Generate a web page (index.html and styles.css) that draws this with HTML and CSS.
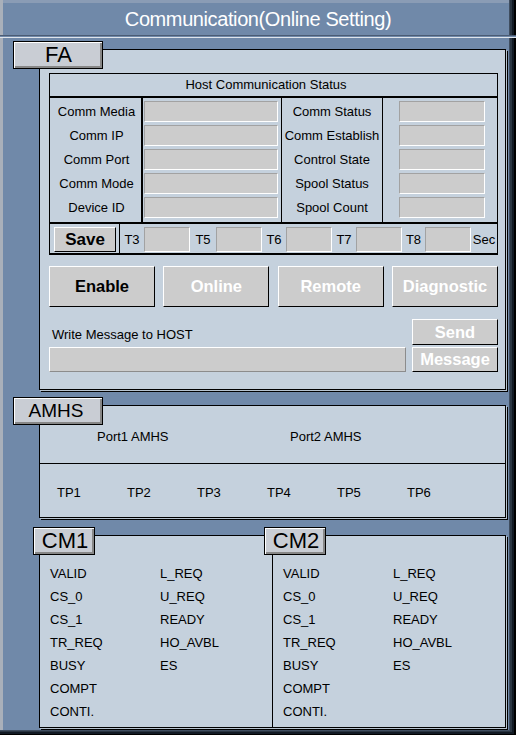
FILE: index.html
```html
<!DOCTYPE html>
<html>
<head>
<meta charset="utf-8">
<title>Communication(Online Setting)</title>
<link rel="stylesheet" href="styles.css">
</head>
<body>
<div class="window">
  <div class="titlebar">Communication(Online Setting)</div>
  <div class="content">

    <section class="group group-fa">
      <div class="tab tab-fa">FA</div>
      <div class="panel panel-fa">
        <div class="status">
          <div class="status-head">Host Communication Status</div>
          <div class="status-body">
            <div class="col col-l1">
              <div class="lbl">Comm Media</div>
              <div class="lbl">Comm IP</div>
              <div class="lbl">Comm Port</div>
              <div class="lbl">Comm Mode</div>
              <div class="lbl">Device ID</div>
            </div>
            <div class="col col-f1">
              <div class="cell"><div class="field f1"></div></div>
              <div class="cell"><div class="field f1"></div></div>
              <div class="cell"><div class="field f1"></div></div>
              <div class="cell"><div class="field f1"></div></div>
              <div class="cell"><div class="field f1"></div></div>
            </div>
            <div class="col col-l2">
              <div class="lbl">Comm Status</div>
              <div class="lbl">Comm Establish</div>
              <div class="lbl">Control State</div>
              <div class="lbl">Spool Status</div>
              <div class="lbl">Spool Count</div>
            </div>
            <div class="col col-f2">
              <div class="cell"><div class="field f2"></div></div>
              <div class="cell"><div class="field f2"></div></div>
              <div class="cell"><div class="field f2"></div></div>
              <div class="cell"><div class="field f2"></div></div>
              <div class="cell"><div class="field f2"></div></div>
            </div>
          </div>
          <div class="status-foot">
            <div class="save-cell"><div class="btn btn-save">Save</div></div>
            <span class="tl tl-3">T3</span><div class="field ft"></div>
            <span class="tl tl-5">T5</span><div class="field ft"></div>
            <span class="tl tl-6">T6</span><div class="field ft"></div>
            <span class="tl tl-7">T7</span><div class="field ft"></div>
            <span class="tl tl-8">T8</span><div class="field ft"></div>
            <span class="tl tl-sec">Sec</span>
          </div>
        </div>

        <div class="actions">
          <div class="btn btn-big btn-active">Enable</div>
          <div class="btn btn-big btn-off">Online</div>
          <div class="btn btn-big btn-off">Remote</div>
          <div class="btn btn-big btn-off">Diagnostic</div>
        </div>

        <div class="msg">
          <div class="msg-left">
            <div class="msg-label">Write Message to HOST</div>
            <div class="msg-input"></div>
          </div>
          <div class="msg-right">
            <div class="btn btn-off btn-send">Send</div>
            <div class="btn btn-off btn-message">Message</div>
          </div>
        </div>
      </div>
    </section>

    <section class="group group-amhs">
      <div class="tab tab-amhs">AMHS</div>
      <div class="panel panel-amhs">
        <div class="amhs-top">
          <span class="port">Port1 AMHS</span>
          <span class="port">Port2 AMHS</span>
        </div>
        <div class="amhs-bottom">
          <span class="tp">TP1</span>
          <span class="tp">TP2</span>
          <span class="tp">TP3</span>
          <span class="tp">TP4</span>
          <span class="tp">TP5</span>
          <span class="tp">TP6</span>
        </div>
      </div>
    </section>

    <section class="group group-cm">
      <div class="tab tab-cm tab-cm1">CM1</div>
      <div class="tab tab-cm tab-cm2">CM2</div>
      <div class="panel panel-cm">
        <div class="cm-half cm-1">
          <div class="sigcol">
            <div class="sig">VALID</div>
            <div class="sig">CS_0</div>
            <div class="sig">CS_1</div>
            <div class="sig">TR_REQ</div>
            <div class="sig">BUSY</div>
            <div class="sig">COMPT</div>
            <div class="sig">CONTI.</div>
          </div>
          <div class="sigcol">
            <div class="sig">L_REQ</div>
            <div class="sig">U_REQ</div>
            <div class="sig">READY</div>
            <div class="sig">HO_AVBL</div>
            <div class="sig">ES</div>
          </div>
        </div>
        <div class="cm-half cm-2">
          <div class="sigcol">
            <div class="sig">VALID</div>
            <div class="sig">CS_0</div>
            <div class="sig">CS_1</div>
            <div class="sig">TR_REQ</div>
            <div class="sig">BUSY</div>
            <div class="sig">COMPT</div>
            <div class="sig">CONTI.</div>
          </div>
          <div class="sigcol">
            <div class="sig">L_REQ</div>
            <div class="sig">U_REQ</div>
            <div class="sig">READY</div>
            <div class="sig">HO_AVBL</div>
            <div class="sig">ES</div>
          </div>
        </div>
      </div>
    </section>

  </div>
</div>
</body>
</html>
```

FILE: styles.css
```css
* {
  box-sizing: border-box;
  margin: 0;
  padding: 0;
}

html, body {
  margin: 0;
  background: #7089a9;
}

body {
  width: 516px;
  height: 735px;
  overflow: hidden;
  font-family: "Liberation Sans", Arial, sans-serif;
  font-size: 13px;
  color: #000;
}

.window {
  position: relative;
  width: 516px;
  height: 735px;
  background: #7089a9;
  box-shadow:
    inset -2px -1px 0 #000,
    inset -4px -3px 0 #121a24,
    inset -6px -4px 0 #2a3542,
    inset -7px -5px 0 #3f4d5f,
    inset 3px 0 0 #a9b0ba,
    inset 0 3px 0 #8a9cb5;
}

.titlebar {
  height: 36px;
  padding-top: 3px;
  line-height: 32px;
  border-bottom: 1px solid #4b5c74;
  box-shadow: 0 1px 0 #7089a9, 0 2px 0 #dfe5ec;
  text-align: center;
  color: #fff;
  font-size: 20px;
  letter-spacing: -0.4px;
}

.content {
  padding-top: 5px;
}

.group {
  position: relative;
  padding-top: 8px;
}

.group-amhs {
  margin-top: 7px;
}

.group-cm {
  margin-top: 9px;
}

.tab {
  position: absolute;
  top: 0;
  z-index: 1;
  height: 28px;
  border: 1px solid #000;
  background: #c9cdd4;
  box-shadow: inset 1px 1px 0 #fff, inset -2px -2px 0 #878787;
  text-align: center;
  line-height: 26px;
  font-size: 22px;
}

.tab-fa {
  left: 13px;
  width: 90px;
  padding-left: 1px;
}

.tab-amhs {
  left: 13px;
  width: 90px;
  font-size: 19px;
  padding-right: 4px;
}

.tab-cm {
  width: 62px;
  padding-left: 2px;
}

.tab-cm1 {
  left: 33px;
}

.tab-cm2 {
  left: 264px;
}

.panel {
  margin-left: 39px;
  width: 467px;
  border: 1px solid #000;
  background: #c5d1dd;
  box-shadow: 1px 1px 0 #b7c3cf, 2px 2px 0 #000;
}

/* ---------- FA ---------- */

.panel-fa {
  padding: 23px 7px 17px 9px;
}

.status {
  border: 1px solid #000;
  border-bottom-width: 2px;
}

.status-head {
  height: 24px;
  line-height: 22px;
  border-bottom: 2px solid #000;
  text-align: center;
  padding-right: 15px;
}

.status-body {
  display: flex;
  height: 126px;
  border-bottom: 2px solid #000;
}

.col {
  padding-bottom: 4px;
}

.col-l1 {
  width: 93px;
  border-right: 2px solid #000;
  padding-left: 2px;
}

.col-f1 {
  width: 139px;
  border-right: 1px solid #000;
  padding-left: 1px;
}

.col-l2 {
  width: 101px;
  border-right: 1px solid #000;
}

.col-f2 {
  width: 114px;
  padding-left: 16px;
}

.lbl {
  height: 24px;
  padding-top: 3px;
  line-height: 21px;
  text-align: center;
  white-space: nowrap;
}

.cell {
  height: 24px;
  padding-top: 3px;
}

.field {
  background: #cccccc;
  border: 1px solid;
  border-color: #a2a2a2 #fff #fff #a2a2a2;
}

.f1 {
  width: 134px;
  height: 21px;
}

.f2 {
  width: 86px;
  height: 21px;
}

.status-foot {
  display: flex;
  height: 29px;
}

.save-cell {
  width: 70px;
  border-right: 1px solid #000;
  padding-top: 3px;
  padding-left: 4px;
}

.btn {
  background: #cccccc;
  border: 1px solid;
  border-color: #fff #000 #000 #fff;
  text-align: center;
  font-weight: bold;
  font-size: 16.5px;
  white-space: nowrap;
}

.btn-save {
  width: 62px;
  height: 25px;
  line-height: 23px;
  font-size: 17px;
}

.tl {
  padding-top: 3px;
  line-height: 25px;
  text-align: center;
}

.tl-3 { width: 24px; }
.tl-5 { width: 26px; }
.tl-6 { width: 24px; }
.tl-7 { width: 24px; }
.tl-8 { width: 23px; }
.tl-sec { width: 26px; }

.ft {
  width: 46px;
  height: 25px;
  margin-top: 3px;
}

.actions {
  display: flex;
  justify-content: space-between;
  margin-top: 11px;
}

.btn-big {
  width: 106px;
  height: 41px;
  line-height: 39px;
}

.btn-active {
  color: #000;
}

.btn-off {
  color: #fff;
}

.msg {
  display: flex;
  justify-content: space-between;
  align-items: flex-end;
  margin-top: 12px;
}

.msg-left {
  width: 357px;
}

.msg-label {
  line-height: 16px;
  padding-left: 3px;
  margin-bottom: 4px;
}

.msg-input {
  height: 25px;
  background: #cccccc;
  border: 1px solid;
  border-color: #fff #8c8c8c #8c8c8c #fff;
}

.msg-right {
  width: 86px;
  display: flex;
  flex-direction: column;
  gap: 2px;
}

.btn-send {
  height: 26px;
  line-height: 24px;
}

.btn-message {
  height: 25px;
  line-height: 23px;
}

/* ---------- AMHS ---------- */

.amhs-top {
  display: flex;
  height: 58px;
  padding-top: 23px;
  padding-left: 57px;
  line-height: 16px;
  border-bottom: 1px solid #000;
}

.port {
  width: 193px;
}

.amhs-bottom {
  display: flex;
  height: 53px;
  padding-top: 21px;
  padding-left: 17px;
  line-height: 16px;
}

.tp {
  width: 70px;
}

/* ---------- CM ---------- */

.panel-cm {
  display: flex;
}

.cm-half {
  display: flex;
  width: 232px;
  padding: 26px 0 4px 10px;
}

.cm-1 {
  width: 233px;
  border-right: 1px solid #000;
}

.sigcol {
  width: 110px;
}

.sig {
  line-height: 23px;
  height: 23px;
  white-space: nowrap;
}
```
